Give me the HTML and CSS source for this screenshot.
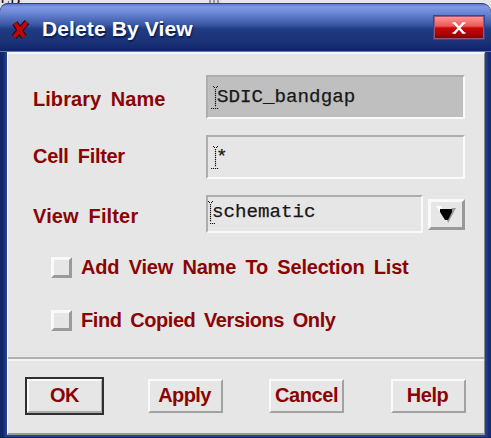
FILE: index.html
```html
<!DOCTYPE html>
<html lang="en">
<head>
<meta charset="utf-8">
<title>Delete By View</title>
<link rel="stylesheet" href="styles.css">
</head>
<body>
<div class="backdrop"><span>LB</span><i></i></div>
<main class="window">
  <header class="titlebar">
    <svg class="app-icon" width="20" height="22" viewBox="0 0 20 22"><path d="M4 4l9 14M16 3L3 18" fill="none" stroke="#200a1e" stroke-width="6.200"/><path d="M4 4l9 14M16 3L3 18" fill="none" stroke="#c20505" stroke-width="4"/></svg>
    <h1>Delete By View</h1>
    <button class="close" aria-label="Close"><svg width="16" height="16" viewBox="0 0 16 16"><path d="M1.500 3h3M11.500 3h3M1.500 13h3M11.500 13h3" stroke="#fff" stroke-width="1.500"/><path d="M3.500 3l9 10M12.500 3l-9 10" fill="none" stroke="#fff" stroke-width="2.500"/></svg></button>
  </header>
  <section class="body">
    <div class="form">
      <div class="row library"><label>Library Name</label>
        <div class="field shaded"><svg class="caret" width="9" height="24" viewBox="0 0 9 24"><path d="M2 1.500h1M6 1.500h1M3 2.500h1M5 2.500h1M4.500 4v18" class="dots"/><path d="M0 23.500h8" class="dots"/></svg><span>SDIC_bandgap</span></div></div>
      <div class="row cell"><label>Cell Filter</label>
        <div class="field"><svg class="caret" width="9" height="24" viewBox="0 0 9 24"><path d="M2 1.500h1M6 1.500h1M3 2.500h1M5 2.500h1M4.500 4v18" class="dots"/><path d="M0 23.500h8" class="dots"/></svg><span class="star">*</span></div></div>
      <div class="row view"><label>View Filter</label>
        <div class="field short"><svg class="caret" width="9" height="24" viewBox="0 0 9 24"><path d="M2 1.500h1M6 1.500h1M3 2.500h1M5 2.500h1M4.500 4v18" class="dots"/><path d="M4 23.500h5" class="dots"/></svg><span>schematic</span></div>
        <button class="drop" aria-label="Views"><svg width="22" height="18" viewBox="0 0 22 18"><path d="M0 0h5l7 17z" fill="#fff"/><path d="M16 2h4l-8 15-1-3z" fill="#999"/><path d="M4 3h12v3l-4 8h-3L4 6z" fill="#050505"/></svg></button></div>
      <div class="option first"><i class="box"></i><label>Add View Name To Selection List</label></div>
      <div class="option second"><i class="box"></i><label>Find Copied Versions Only</label></div>
    </div>
    <footer class="actions">
      <button class="btn default"><span>OK</span></button>
      <button class="btn apply">Apply</button>
      <button class="btn cancel">Cancel</button>
      <button class="btn help">Help</button>
    </footer>
  </section>
</main>
</body>
</html>
```
FILE: styles.css
```css
* { box-sizing: border-box; }
body {
  margin: 0;
  width: 491px;
  height: 438px;
  overflow: hidden;
  background: #e6e6e6;
  font: bold 20px/24px "Liberation Sans", sans-serif;
  color: #8b0404;
}
button { font: inherit; color: inherit; padding: 0; margin: 0; }
svg { display: block; flex: none; }

/* strip of the window behind the dialog */
.backdrop { height: 3px; overflow: hidden; display: flex; align-items: flex-end; color: #111; }
.backdrop span { width: 209px; height: 16px; flex: none; font: 16px/16px "Liberation Serif", serif; margin-bottom: -4px; }
.backdrop i { width: 12px; height: 3px; background: repeating-linear-gradient(90deg, #999 0 2px, #ddd 2px 4px); }

.window {
  height: 435px;
  display: flex;
  flex-direction: column;
  background: linear-gradient(90deg, #122768 0 3px, #24418c 6px 486px, #142b72 489px);
  border-radius: 8px 9px 0 0;
  padding-bottom: 6px;
  border-bottom: 1px solid #10245f;
  overflow: hidden;
}
.titlebar {
  height: 49px;
  flex: none;
  display: flex;
  align-items: flex-start;
  border-top: 1px solid #31427f;
  border-bottom: 1px solid #6678b4;
  border-radius: 8px 9px 0 0;
  background: linear-gradient(#5a78cb 0, #7f99e4 3px, #6e89d7 8px, #3c5ba8 20px, #203b83 25px, #1b3376 38px, #10256c 46px);
}
.app-icon { margin: 15px 0 0 11px; }
.titlebar h1 {
  margin: 12px 0 0 11px;
  font-size: 21px;
  line-height: 26px;
  letter-spacing: .12px;
  color: #fff;
  text-shadow: 1px 2px 1px #0c1d55;
}
.close {
  width: 52px;
  height: 25px;
  margin: 11px 6px 0 auto;
  border: 1px solid #2d4a96;
  box-shadow: inset 0 0 0 1px #9c5574;
  background: linear-gradient(#ff9b98, #ec5a58 10px, #c80808 12px, #a90505 18px, #780303);
  display: grid;
  place-items: center;
}
.body {
  flex: 1;
  margin: 0 6px 0 7px;
  background: #e6e6e6;
  border: 2px solid;
  border-width: 2px 1px 2px 1px;
  border-color: #f7f7f7 #898989 #9a9a9a #fafafa;
}
.form { height: 303px; padding: 21px 0 0 26px; }
.row { display: flex; align-items: flex-start; }
label { white-space: nowrap; letter-spacing: -.14px; word-spacing: 4px; }
.row label { width: 173px; flex: none; padding-top: 14px; margin-left: -1px; }
.row.library { height: 60px; }
.row.library label { padding-top: 12px; letter-spacing: .05px; }
.row.cell { height: 60px; }
.row.cell label { padding-top: 9px; letter-spacing: -.3px; }
.row.view label { padding-top: 9px; letter-spacing: .15px; }
.row.view { height: 62px; }
.field {
  width: 259px;
  height: 44px;
  display: flex;
  padding: 8px 0 0 3px;
  border: 2px solid;
  border-color: #adadad #fafafa #fafafa #adadad;
  color: #171717;
  font: 19.2px/25px "Liberation Mono", monospace;
  -webkit-text-stroke: .25px #171717;
}
.shaded { background: #bfbfbf; }
.field span { margin-left: -3px; }
.field .star { margin-left: -4px; }
.dots { fill: none; stroke: #151515; stroke-width: 1.2; stroke-dasharray: 1.2 .8; }
.short { width: 217px; height: 38px; padding: 3px 0 0 0; }
.short .caret { margin-left: -2px; }
.drop {
  width: 37px;
  height: 31px;
  margin: 4px 0 0 5px;
  border: 3px solid;
  border-color: #fafafa #999 #999 #fafafa;
  background: #e6e6e6;
  padding: 1px 0 0 5px;
}
.option { display: flex; height: 53px; padding-left: 17px; }
.box {
  width: 21px;
  height: 21px;
  border: 3px solid;
  border-color: #fafafa #9a9a9a #9a9a9a #fafafa;
}
.option label { margin: -2px 0 0 9px; letter-spacing: -.2px; }
.option.second label { letter-spacing: -.42px; word-spacing: 3.5px; }
.actions {
  display: flex;
  height: 76px;
  border-top: 2px solid #b0b0b0;
  box-shadow: inset 0 2px #f5f5f5;
  padding: 20px 0 0 17px;
}
.btn {
  width: 75px;
  height: 34px;
  border: 2px solid;
  border-color: #fafafa #a2a2a2 #a2a2a2 #fafafa;
  background: #e6e6e6;
  line-height: 26px;
  padding-bottom: 3px;
  letter-spacing: -.4px;
}
.default { width: 79px; height: 38px; margin: -2px 44px 0 0; padding: 0; border-color: #303030; }
.default span { display: block; height: 34px; line-height: 28px; border: 1px solid; border-width: 2px 1px 2px 2px; border-color: #fafafa #aaa #aaa #fafafa; padding-right: 1px; }
.apply { letter-spacing: -.6px; padding-right: 2px; }
.cancel { margin-left: 46px; }
.help { margin-left: 47px; padding-right: 2px; }
```
